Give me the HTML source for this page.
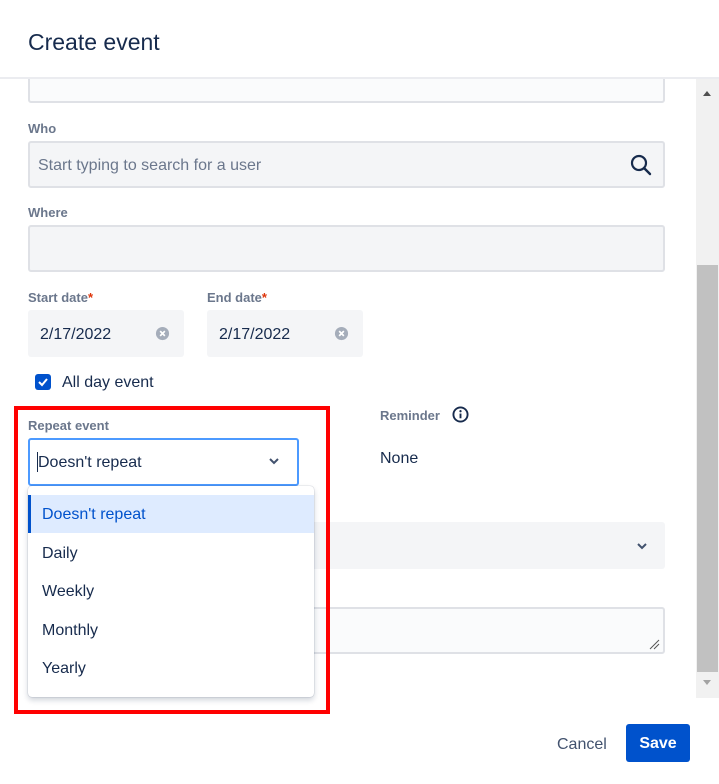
<!DOCTYPE html>
<html><head><style>
*{box-sizing:border-box;margin:0;padding:0}
body{width:719px;height:784px;background:#fff;font-family:"Liberation Sans",sans-serif;color:#172b4d;position:relative;overflow:hidden}
.a{position:absolute}
.lbl{position:absolute;font-size:13px;font-weight:bold;color:#6b778c}
.inp{position:absolute;background:#f4f5f7;border:2px solid #dfe1e6;border-radius:3px}
.req{color:#de350b}
.opt{position:absolute;left:28px;width:286px;height:38px;font-size:16px;line-height:40px;padding-left:14px;color:#172b4d}
</style></head><body>
<div class="inp" style="left:28px;top:72px;width:637px;height:31px;background:#fafbfc"></div>
<div class="a" style="left:0;top:0;width:719px;height:77px;background:#fff"></div>
<div class="a" style="left:28px;top:29px;font-size:23px;color:#172b4d">Create event</div>
<div class="a" style="left:0;top:77px;width:719px;height:2px;background:#ebecf0"></div>

<div class="lbl" style="left:28px;top:121px">Who</div>
<div class="inp" style="left:28px;top:141px;width:637px;height:47px"></div>
<div class="a" style="left:38px;top:157px;font-size:16px;color:#6b778c">Start typing to search for a user</div>
<svg class="a" style="left:629px;top:153px" width="24" height="24" viewBox="0 0 24 24"><circle cx="10" cy="10" r="7" fill="none" stroke="#172b4d" stroke-width="2.2"/><line x1="15" y1="15" x2="21" y2="21" stroke="#172b4d" stroke-width="2.4" stroke-linecap="round"/></svg>
<div class="lbl" style="left:28px;top:205px">Where</div>
<div class="inp" style="left:28px;top:225px;width:637px;height:47px"></div>

<div class="lbl" style="left:28px;top:290px">Start date<span class="req">*</span></div>
<div class="lbl" style="left:207px;top:290px">End date<span class="req">*</span></div>
<div class="inp" style="left:28px;top:310px;width:156px;height:47px;border:none"></div>
<div class="inp" style="left:207px;top:310px;width:156px;height:47px;border:none"></div>
<div class="a" style="left:40px;top:326px;font-size:16px">2/17/2022</div>
<div class="a" style="left:219px;top:326px;font-size:16px">2/17/2022</div>
<svg class="a" style="left:155px;top:326px" width="15" height="15" viewBox="0 0 16 16"><circle cx="8" cy="8" r="7" fill="#a5adba"/><path d="M5.5 5.5l5 5M10.5 5.5l-5 5" stroke="#fff" stroke-width="1.8"/></svg>
<svg class="a" style="left:334px;top:326px" width="15" height="15" viewBox="0 0 16 16"><circle cx="8" cy="8" r="7" fill="#a5adba"/><path d="M5.5 5.5l5 5M10.5 5.5l-5 5" stroke="#fff" stroke-width="1.8"/></svg>

<svg class="a" style="left:34px;top:373px" width="18" height="18" viewBox="0 0 18 18"><rect x="1" y="1" width="16" height="16" rx="3" fill="#0052cc"/><path d="M5 9l3 3 5-6" fill="none" stroke="#fff" stroke-width="2"/></svg>
<div class="a" style="left:62px;top:374px;font-size:16px">All day event</div>

<div class="lbl" style="left:380px;top:408px">Reminder</div>
<svg class="a" style="left:452px;top:406px" width="17" height="17" viewBox="0 0 18 18"><circle cx="9" cy="9" r="7.5" fill="none" stroke="#172b4d" stroke-width="2"/><rect x="8" y="8" width="2" height="5" fill="#172b4d"/><circle cx="9" cy="5.5" r="1.2" fill="#172b4d"/></svg>
<div class="a" style="left:380px;top:450px;font-size:16px">None</div>

<div class="inp" style="left:28px;top:522px;width:637px;height:47px;border:none"></div>
<svg class="a" style="left:636px;top:542px" width="12" height="8" viewBox="0 0 12 8"><path d="M2 2l4 4 4-4" fill="none" stroke="#42526e" stroke-width="2"/></svg>
<div class="inp" style="left:28px;top:607px;width:637px;height:47px;background:#fafbfc"></div>
<svg class="a" style="left:648px;top:638px" width="12" height="12" viewBox="0 0 12 12"><path d="M2 11L11 2M6 11l5-5" stroke="#555" stroke-width="1"/></svg>

<div class="a" style="left:14px;top:406px;width:316px;height:308px;border:4px solid #ff0000"></div>
<div class="lbl" style="left:28px;top:418px">Repeat event</div>
<div class="a" style="left:28px;top:438px;width:271px;height:48px;border:2px solid #4c9aff;border-radius:3px;background:#fff"></div>
<div class="a" style="left:37px;top:452px;width:1px;height:20px;background:#172b4d"></div>
<div class="a" style="left:38px;top:454px;font-size:16px">Doesn't repeat</div>
<svg class="a" style="left:268px;top:457px" width="12" height="8" viewBox="0 0 12 8"><path d="M2 2l4 4 4-4" fill="none" stroke="#42526e" stroke-width="2"/></svg>
<div class="a" style="left:28px;top:486px;width:286px;height:211px;background:#fff;border-radius:4px;box-shadow:0 0 1px rgba(9,30,66,.4),0 3px 6px rgba(9,30,66,.2)"></div>
<div class="opt" style="top:495px;background:#deebff;color:#0052cc;border-left:3px solid #0052cc;padding-left:11px">Doesn't repeat</div>
<div class="opt" style="top:534px">Daily</div>
<div class="opt" style="top:572px">Weekly</div>
<div class="opt" style="top:611px">Monthly</div>
<div class="opt" style="top:649px">Yearly</div>

<div class="a" style="left:696px;top:79px;width:23px;height:619px;background:#f1f1f1"></div>
<div class="a" style="left:697px;top:265px;width:21px;height:407px;background:#c1c1c1"></div>
<svg class="a" style="left:700px;top:88px" width="14" height="10"><path d="M3 8h8L7 3z" fill="#505050"/></svg>
<svg class="a" style="left:700px;top:678px" width="14" height="10"><path d="M3 2h8L7 7z" fill="#a3a3a3"/></svg>

<div class="a" style="left:557px;top:736px;font-size:16px;color:#42526e">Cancel</div>
<div class="a" style="left:626px;top:724px;width:64px;height:38px;background:#0052cc;border-radius:3px;color:#fff;font-weight:bold;font-size:16px;line-height:40px;text-align:center">Save</div>
</body></html>
